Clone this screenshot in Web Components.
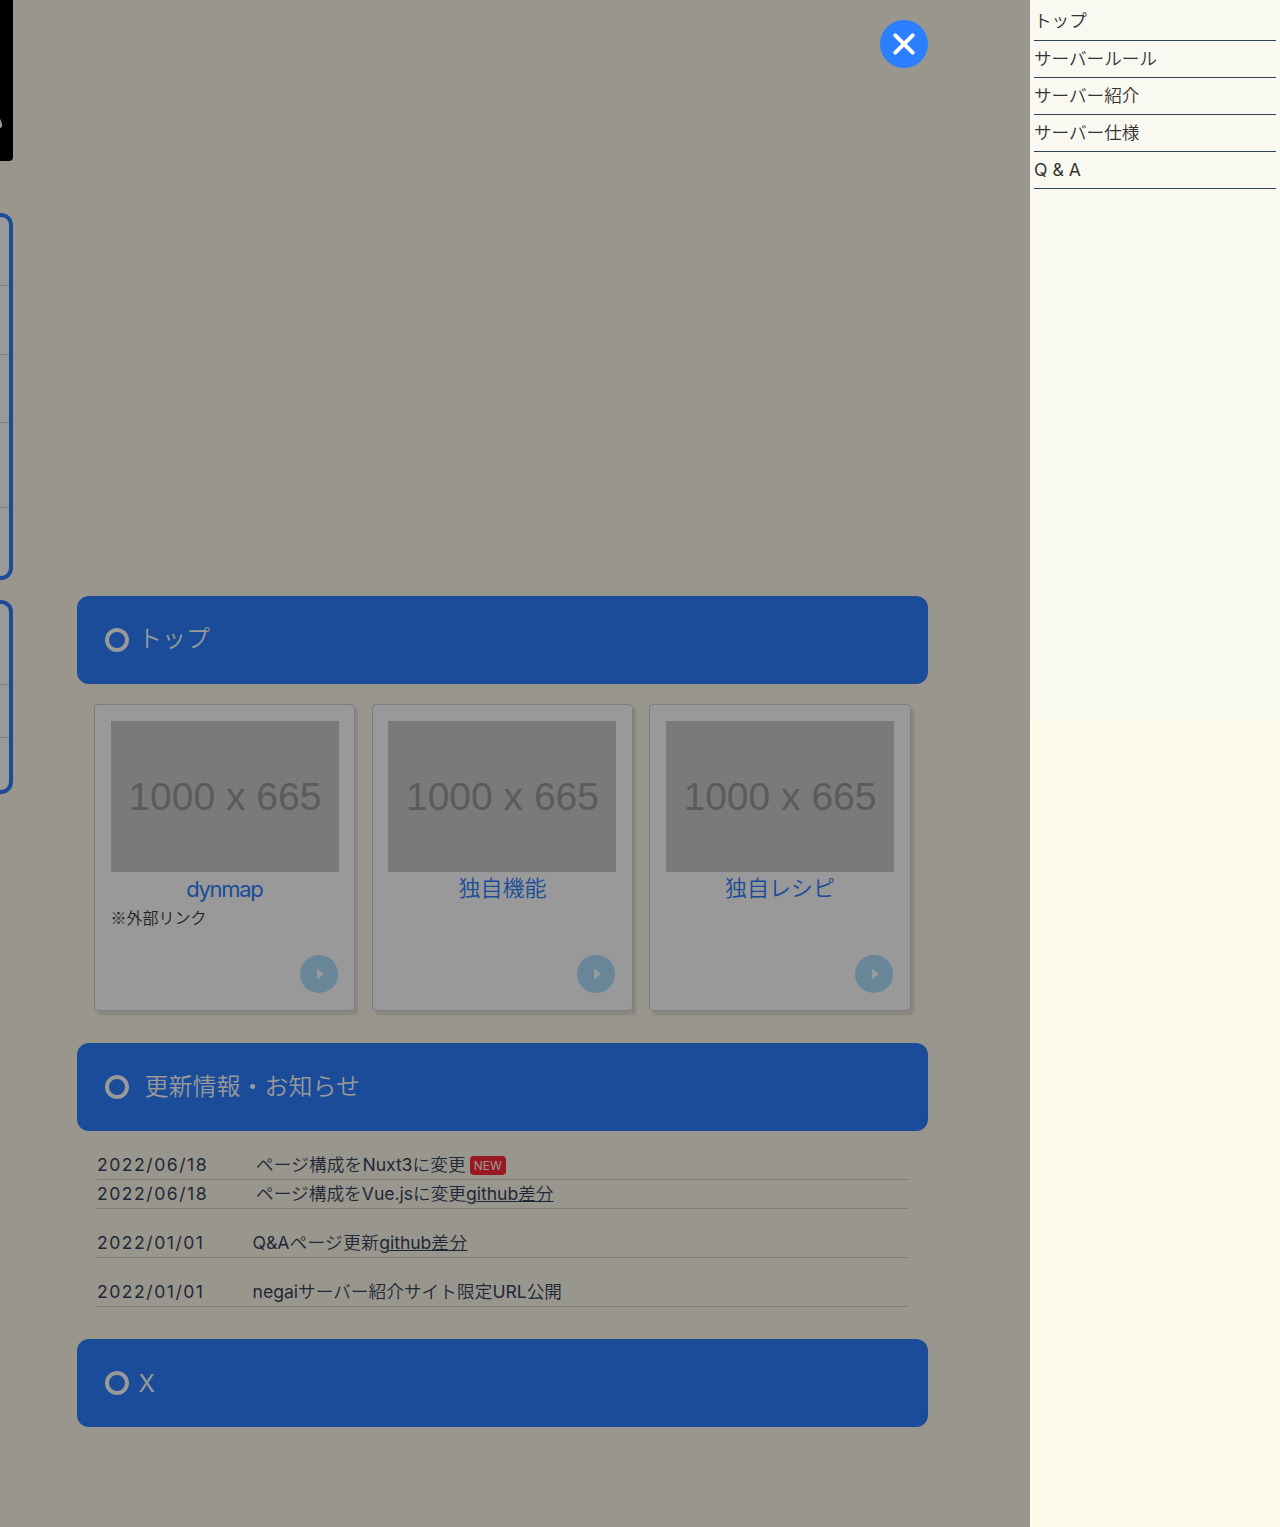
<!DOCTYPE html>
<html lang="ja">
<head>
<meta charset="utf-8">
<title>negaiサーバー</title>
<style>
html,body{margin:0;height:1527px;overflow:hidden}
body{background:#99968d;font-family:Inter,"Noto Sans CJK JP",sans-serif;font-weight:350;color:#1e2838}
</style>
</head>
<body>
<site-page></site-page>
<script>
const define=(name,html,setup)=>customElements.define(name,class extends HTMLElement{
  constructor(){super();const r=this.attachShadow({mode:'open'});r.innerHTML=html;if(setup)setup(this,r)}
});
define('side-box',`<style>
:host{display:block;box-sizing:border-box;width:13px;border:solid #1a4c99;border-width:4px 4px 4px 0;border-radius:0 12px 12px 0;background:#999;overflow:hidden}
</style><slot></slot>`);
define('side-row',`<style>
:host{display:block;box-sizing:border-box;border-bottom:1px solid #7d7f82}
</style>`);
define('side-column',`<style>
:host{display:block;width:13px}
.banner{height:161px;background:#000;border-radius:0 0 4px 0;margin-bottom:52px;overflow:hidden}
svg{display:block}
side-box{margin-bottom:20px}
.a{height:367px}.b{height:194px}
.r1{height:69px}.r2{height:68px}.r3{height:85px}.r4{height:81px}.r5{height:53px}
</style>
<div class="banner"><svg width="13" height="161"><path d="M-1 117.5Q2.2 121 2.2 126Q1.8 128 0 128H-1Z" fill="#999"/></svg></div>
<side-box class="a"><side-row class="r1"></side-row><side-row class="r1"></side-row><side-row class="r2"></side-row><side-row class="r3"></side-row></side-box>
<side-box class="b"><side-row class="r4"></side-row><side-row class="r5"></side-row></side-box>`);
define('section-title',`<style>
:host{display:flex;align-items:center;height:88px;box-sizing:border-box;padding-left:28px;border-radius:12px;background:#1a4c99;color:#999;font-size:24px;line-height:36px;white-space:pre}
i{box-sizing:border-box;width:24px;height:24px;border:4px solid #999;border-radius:50%;margin-right:8px}
span{display:block;margin-top:var(--lift,-2px);padding-left:var(--indent,1px)}
</style><i></i><span><slot></slot></span>`);
define('link-card',`<style>
:host{display:flex;flex-direction:column;box-sizing:border-box;width:261.29px;height:307px;padding:16px 0 16px 15.75px;border:1px solid #7b7d80;border-radius:4px;background:#999;box-shadow:3px 4px 2px #89867e}
.pic{width:228px;height:151px;background:#7a7a7a;color:#5b5b5b;display:flex;align-items:center;justify-content:center;font:400 39px/44px "Liberation Sans",sans-serif;white-space:nowrap}
.name{width:228px;text-align:center;font-size:22px;line-height:33px;color:#1a4c99}
.note{font-family:"Noto Sans CJK JP",sans-serif;font-size:16px;line-height:24px;margin-left:-.5px;color:#1f1f1f}
svg{display:block;margin:auto 16.6px 1px auto}
</style><div class="pic">1000 x 665</div><div class="name"><slot></slot></div><div class="note"><slot name="note"></slot></div>
<svg width="38" height="38"><circle cx="19" cy="19" r="19" fill="#688698"/><path d="M17 13.6L24.2 19L17 24.5Z" fill="#999"/></svg>`);
define('news-row',`<style>
:host{display:flex;align-items:center;box-sizing:border-box;height:29px;border-bottom:1px solid #7b7c7f;font-size:17.6px;line-height:28px;white-space:nowrap}
time{display:block;font-weight:400;width:var(--date,155.6px);letter-spacing:1.5px}
div{letter-spacing:var(--track,.2px)}
</style><time></time><div><slot></slot></div>`,(el,r)=>{r.querySelector('time').textContent=el.getAttribute('date')});
define('new-badge',`<style>
:host{display:inline-block;margin:-2px 0 0 4px;width:36px;height:19px;line-height:19px;border-radius:4px;background:#991920;color:#999;font-size:12px;font-weight:400;letter-spacing:0;text-align:center;vertical-align:middle}
</style><slot></slot>`);
define('close-button',`<style>
:host{position:absolute;left:880px;top:20px;width:48px;height:48px}
svg{display:block}
</style><svg width="48" height="48"><circle cx="24" cy="24" r="24" fill="#2b7fff"/><path d="M15.3 15.3L32.7 32.7M32.7 15.3L15.3 32.7" stroke="#fff" stroke-width="4" stroke-linecap="round"/></svg>`);
define('menu-item',`<style>
:host{display:block;box-sizing:border-box;height:37px;padding-top:4px;border-bottom:1px solid #314158;font-size:17.6px;line-height:27px;color:#333;white-space:nowrap}
</style><slot></slot>`);
define('side-drawer',`<style>
:host{display:block;width:250px;background:#fffbeb}
nav{box-sizing:border-box;height:720px;padding:4px;background:#f9f9f1}
.first{padding-top:3px}
.latin{font-weight:400;line-height:28px}
</style><nav><menu-item class="first">トップ</menu-item><menu-item>サーバールール</menu-item><menu-item>サーバー紹介</menu-item><menu-item>サーバー仕様</menu-item><menu-item class="latin">Q &amp; A</menu-item></nav>`);
define('site-page',`<style>
:host{display:flex;width:1280px;height:1527px}
main{width:851px;padding:596px 102px 0 64px}
.cards{display:flex;gap:16.25px;margin:20px 0 32px 17.19px}
.news{margin:20px 20px 32px;display:flex;flex-direction:column}
.late{margin-top:20px;--date:155.6px}
.early{--date:159px}
.early,.late{--track:.2px}
.vue{--track:.1px}
.qa{--track:.45px}
.open{--track:.1px}
news-row u{text-underline-offset:1px;text-decoration-thickness:1px}
b{font-weight:400;letter-spacing:-.05px}
.tight{position:relative;top:1px;left:-.7px;letter-spacing:-1.3px}
.indent{--indent:7.4px;--lift:0px}
.x{--indent:1.6px;--lift:1px;font-weight:400}
</style>
<side-column></side-column>
<main>
<section-title>トップ</section-title>
<div class="cards">
<link-card><b class="tight">dynmap</b><span slot="note">※外部リンク</span></link-card>
<link-card>独自機能</link-card>
<link-card>独自レシピ</link-card>
</div>
<section-title class="indent">更新情報・お知らせ</section-title>
<div class="news">
<news-row class="early" date="2022/06/18">ページ構成を<b>Nuxt3</b>に変更<new-badge>NEW</new-badge></news-row>
<news-row class="early vue" date="2022/06/18">ページ構成を<b>Vue.js</b>に変更<u><b>github</b>差分</u></news-row>
<news-row class="late qa" date="2022/01/01"><b>Q&amp;A</b>ページ更新<u><b>github</b>差分</u></news-row>
<news-row class="late open" date="2022/01/01"><b>negai</b>サーバー紹介サイト限定<b>URL</b>公開</news-row>
</div>
<section-title class="x">X</section-title>
</main>
<side-drawer></side-drawer>
<close-button></close-button>`);
</script>
</body>
</html>
